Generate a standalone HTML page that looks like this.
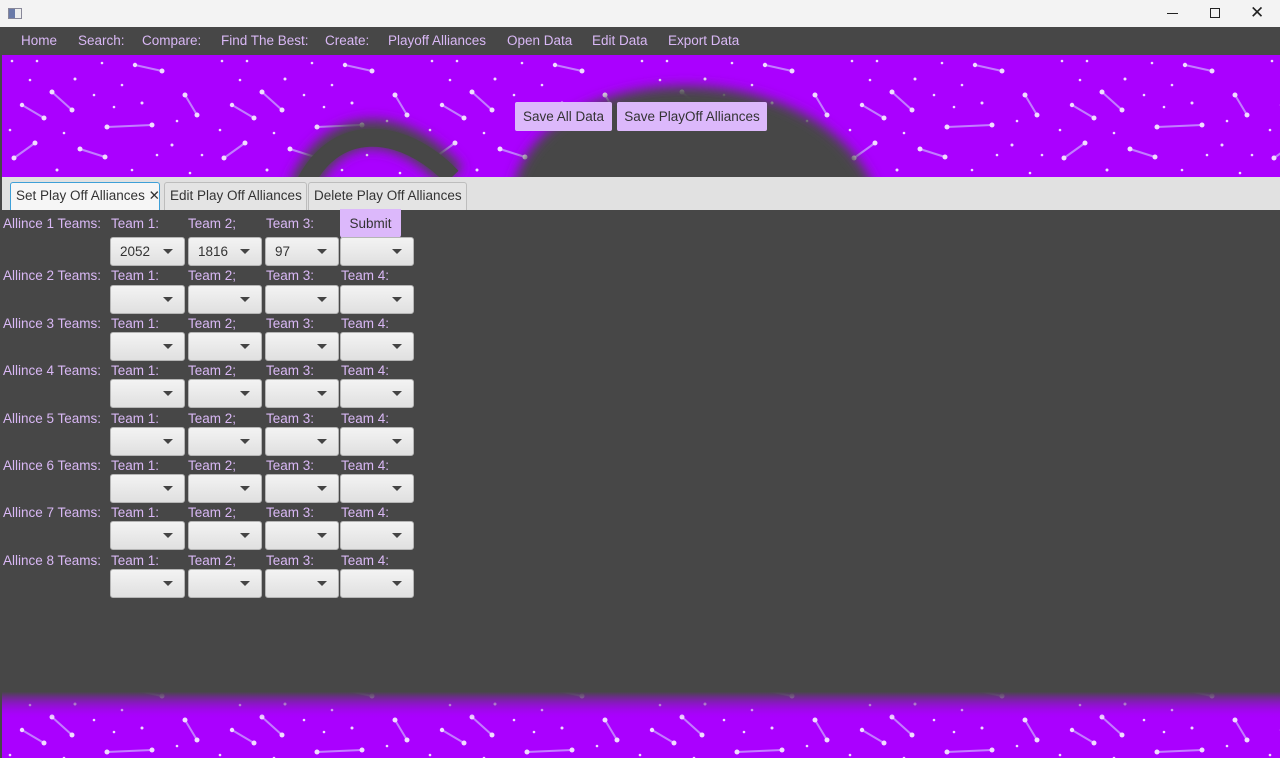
<!DOCTYPE html>
<html><head><meta charset="utf-8"><style>
*{margin:0;padding:0;box-sizing:border-box}
body{width:1280px;height:758px;overflow:hidden;background:#474747;font-family:"Liberation Sans",sans-serif;position:relative;white-space:nowrap}
.title{position:absolute;left:0;top:0;width:1280px;height:27px;background:#f3f3f3}
.menu{position:absolute;top:27px;left:0;width:1280px;height:28px;background:#474747}
.menu span{position:absolute;top:6px;font-size:13.5px;color:#d9b8f5}
.banner{position:absolute;left:2px;top:55px;width:1278px;height:122px;overflow:hidden}
.btn{position:absolute;height:29px;background:#dcb8fb;border-radius:2px;color:#333;font-size:13.5px;line-height:29px;text-align:center}
.tabbar{position:absolute;left:2px;top:177px;width:1278px;height:33px;background:#e1e1e1}
.tab{position:absolute;top:5px;height:28px;background:#e4e4e4;border:1px solid #bdbdbd;border-bottom:none;border-radius:3px 3px 0 0;font-size:13.5px;line-height:26px;color:#333;padding-left:5px;overflow:hidden}
.lbl{position:absolute;font-size:13.5px;color:#d9b8f5}
.cb{position:absolute;height:29px;background:linear-gradient(#f3f3f3,#e0e0e0);border:1px solid #b5b5b5;border-radius:3px;font-size:13.5px;color:#333;line-height:27px;padding-left:9px}
.cb:after{content:"";position:absolute;right:11px;top:11px;border-left:5px solid transparent;border-right:5px solid transparent;border-top:5px solid #444}
.bottom{position:absolute;left:2px;top:680px;width:1278px;height:78px;overflow:hidden}
</style></head><body>
<div class="title">
<div style="position:absolute;left:8px;top:8px;width:14px;height:11px;border:1px solid #889;background:linear-gradient(90deg,#6a7aa8 50%,#eee 50%)"></div>
<div style="position:absolute;left:1167px;top:13px;width:11px;height:1px;background:#222"></div>
<div style="position:absolute;left:1210px;top:8px;width:10px;height:10px;border:1px solid #222"></div>
<div style="position:absolute;left:1250px;top:3px;font-size:17px;color:#222">✕</div>
</div>
<div class="menu">
<span style="left:21px">Home</span><span style="left:78px">Search:</span><span style="left:142px">Compare:</span><span style="left:221px">Find The Best:</span><span style="left:325px">Create:</span><span style="left:388px">Playoff Alliances</span><span style="left:507px">Open Data</span><span style="left:592px">Edit Data</span><span style="left:668px">Export Data</span>
</div>
<svg width="0" height="0" style="position:absolute"><defs>
<pattern id="st" width="210" height="125" patternUnits="userSpaceOnUse">
<g stroke="#c89cff" stroke-width="2" opacity=".8"><line x1="50" y1="37" x2="70" y2="55"/><line x1="105" y1="72" x2="150" y2="70"/><line x1="20" y1="50" x2="42" y2="63"/><line x1="160" y1="16" x2="133" y2="10"/><line x1="12" y1="103" x2="33" y2="88"/><line x1="78" y1="94" x2="103" y2="102"/><line x1="183" y1="40" x2="195" y2="60"/></g>
<g fill="#f0dcff"><circle cx="50" cy="37" r="2.5"/><circle cx="70" cy="55" r="2.5"/><circle cx="105" cy="72" r="2.5"/><circle cx="150" cy="70" r="2.5"/><circle cx="20" cy="50" r="2.2"/><circle cx="42" cy="63" r="2.5"/><circle cx="160" cy="16" r="2.5"/><circle cx="133" cy="10" r="2.2"/><circle cx="12" cy="103" r="2.5"/><circle cx="33" cy="88" r="2.5"/><circle cx="78" cy="94" r="2.5"/><circle cx="103" cy="102" r="2.5"/><circle cx="183" cy="40" r="2.5"/><circle cx="195" cy="60" r="2.5"/>
<circle cx="10" cy="6" r="1.3"/><circle cx="35" cy="6" r="1.3"/><circle cx="73" cy="24" r="1.5"/><circle cx="92" cy="40" r="1.3"/><circle cx="120" cy="30" r="1.3"/><circle cx="140" cy="48" r="1.5"/><circle cx="200" cy="100" r="1.3"/><circle cx="170" cy="90" r="1.5"/><circle cx="130" cy="115" r="1.3"/><circle cx="55" cy="115" r="1.5"/><circle cx="8" cy="75" r="1.3"/><circle cx="188" cy="118" r="1.3"/><circle cx="100" cy="8" r="1.3"/><circle cx="62" cy="78" r="1.3"/><circle cx="155" cy="100" r="1.3"/><circle cx="28" cy="25" r="1.3"/><circle cx="112" cy="52" r="1.3"/><circle cx="175" cy="66" r="1.3"/></g>
</pattern>
<filter id="bl" x="-20%" y="-20%" width="140%" height="140%"><feGaussianBlur stdDeviation="6"/></filter>
<linearGradient id="fd" x1="0" y1="0" x2="0" y2="1"><stop offset="0" stop-color="#474747"/><stop offset=".15" stop-color="#474747"/><stop offset=".5" stop-color="#aa00ff" stop-opacity="0.0"/></linearGradient>
</defs></svg>
<div class="banner"><svg width="1278" height="122">
<rect width="1278" height="122" fill="#aa00ff"/>
<rect width="1278" height="122" fill="url(#st)"/>
<g filter="url(#bl)"><path d="M300,135 C330,60 400,65 450,122" stroke="#474747" stroke-width="28" fill="none"/><path d="M510,140 C530,0 820,-10 875,140 Z" fill="#474747"/></g>
<path d="M300,135 C330,65 400,70 450,122" stroke="#474747" stroke-width="18" fill="none"/>
<path d="M525,140 C545,20 810,10 855,140 Z" fill="#474747"/>
</svg>
<div class="btn" style="left:513px;top:47px;width:97px">Save All Data</div>
<div class="btn" style="left:615px;top:47px;width:150px">Save PlayOff Alliances</div>
</div>
<div class="tabbar">
<div class="tab" style="left:8px;width:150px;background:#f6f6f6;border:1px solid #3ea0d8;border-bottom:none;color:#333">Set Play Off Alliances ✕</div>
<div class="tab" style="left:162px;width:143px">Edit Play Off Alliances</div>
<div class="tab" style="left:306px;width:159px">Delete Play Off Alliances</div>
</div>
<div style="position:absolute;left:340px;top:209px;width:61px;height:29px;background:#dcb8fb;border-radius:0 0 3px 3px;font-size:13.5px;color:#333;text-align:center;line-height:29px">Submit</div>
<div class="lbl" style="left:3px;top:216px">Allince 1 Teams:</div><div class="lbl" style="left:111px;top:216px">Team 1:</div><div class="lbl" style="left:188px;top:216px">Team 2;</div><div class="lbl" style="left:266px;top:216px">Team 3:</div>
<div class="cb" style="left:110px;top:237px;width:75px">2052</div><div class="cb" style="left:188px;top:237px;width:74px">1816</div><div class="cb" style="left:265px;top:237px;width:74px">97</div><div class="cb" style="left:340px;top:237px;width:74px"></div>
<div class="lbl" style="left:3px;top:268px">Allince 2 Teams:</div><div class="lbl" style="left:111px;top:268px">Team 1:</div><div class="lbl" style="left:188px;top:268px">Team 2;</div><div class="lbl" style="left:266px;top:268px">Team 3:</div><div class="lbl" style="left:341px;top:268px">Team 4:</div>
<div class="cb" style="left:110px;top:285px;width:75px"></div><div class="cb" style="left:188px;top:285px;width:74px"></div><div class="cb" style="left:265px;top:285px;width:74px"></div><div class="cb" style="left:340px;top:285px;width:74px"></div>
<div class="lbl" style="left:3px;top:316px">Allince 3 Teams:</div><div class="lbl" style="left:111px;top:316px">Team 1:</div><div class="lbl" style="left:188px;top:316px">Team 2;</div><div class="lbl" style="left:266px;top:316px">Team 3:</div><div class="lbl" style="left:341px;top:316px">Team 4:</div>
<div class="cb" style="left:110px;top:332px;width:75px"></div><div class="cb" style="left:188px;top:332px;width:74px"></div><div class="cb" style="left:265px;top:332px;width:74px"></div><div class="cb" style="left:340px;top:332px;width:74px"></div>
<div class="lbl" style="left:3px;top:363px">Allince 4 Teams:</div><div class="lbl" style="left:111px;top:363px">Team 1:</div><div class="lbl" style="left:188px;top:363px">Team 2;</div><div class="lbl" style="left:266px;top:363px">Team 3:</div><div class="lbl" style="left:341px;top:363px">Team 4:</div>
<div class="cb" style="left:110px;top:379px;width:75px"></div><div class="cb" style="left:188px;top:379px;width:74px"></div><div class="cb" style="left:265px;top:379px;width:74px"></div><div class="cb" style="left:340px;top:379px;width:74px"></div>
<div class="lbl" style="left:3px;top:411px">Allince 5 Teams:</div><div class="lbl" style="left:111px;top:411px">Team 1:</div><div class="lbl" style="left:188px;top:411px">Team 2;</div><div class="lbl" style="left:266px;top:411px">Team 3:</div><div class="lbl" style="left:341px;top:411px">Team 4:</div>
<div class="cb" style="left:110px;top:427px;width:75px"></div><div class="cb" style="left:188px;top:427px;width:74px"></div><div class="cb" style="left:265px;top:427px;width:74px"></div><div class="cb" style="left:340px;top:427px;width:74px"></div>
<div class="lbl" style="left:3px;top:458px">Allince 6 Teams:</div><div class="lbl" style="left:111px;top:458px">Team 1:</div><div class="lbl" style="left:188px;top:458px">Team 2;</div><div class="lbl" style="left:266px;top:458px">Team 3:</div><div class="lbl" style="left:341px;top:458px">Team 4:</div>
<div class="cb" style="left:110px;top:474px;width:75px"></div><div class="cb" style="left:188px;top:474px;width:74px"></div><div class="cb" style="left:265px;top:474px;width:74px"></div><div class="cb" style="left:340px;top:474px;width:74px"></div>
<div class="lbl" style="left:3px;top:505px">Allince 7 Teams:</div><div class="lbl" style="left:111px;top:505px">Team 1:</div><div class="lbl" style="left:188px;top:505px">Team 2;</div><div class="lbl" style="left:266px;top:505px">Team 3:</div><div class="lbl" style="left:341px;top:505px">Team 4:</div>
<div class="cb" style="left:110px;top:521px;width:75px"></div><div class="cb" style="left:188px;top:521px;width:74px"></div><div class="cb" style="left:265px;top:521px;width:74px"></div><div class="cb" style="left:340px;top:521px;width:74px"></div>
<div class="lbl" style="left:3px;top:553px">Allince 8 Teams:</div><div class="lbl" style="left:111px;top:553px">Team 1:</div><div class="lbl" style="left:188px;top:553px">Team 2;</div><div class="lbl" style="left:266px;top:553px">Team 3:</div><div class="lbl" style="left:341px;top:553px">Team 4:</div>
<div class="cb" style="left:110px;top:569px;width:75px"></div><div class="cb" style="left:188px;top:569px;width:74px"></div><div class="cb" style="left:265px;top:569px;width:74px"></div><div class="cb" style="left:340px;top:569px;width:74px"></div>
<div class="bottom"><svg width="1278" height="78">
<rect width="1278" height="78" fill="#aa00ff"/>
<rect width="1278" height="78" fill="url(#st)"/>
<rect width="1278" height="78" fill="url(#fd)"/>
</svg></div>
</body></html>
